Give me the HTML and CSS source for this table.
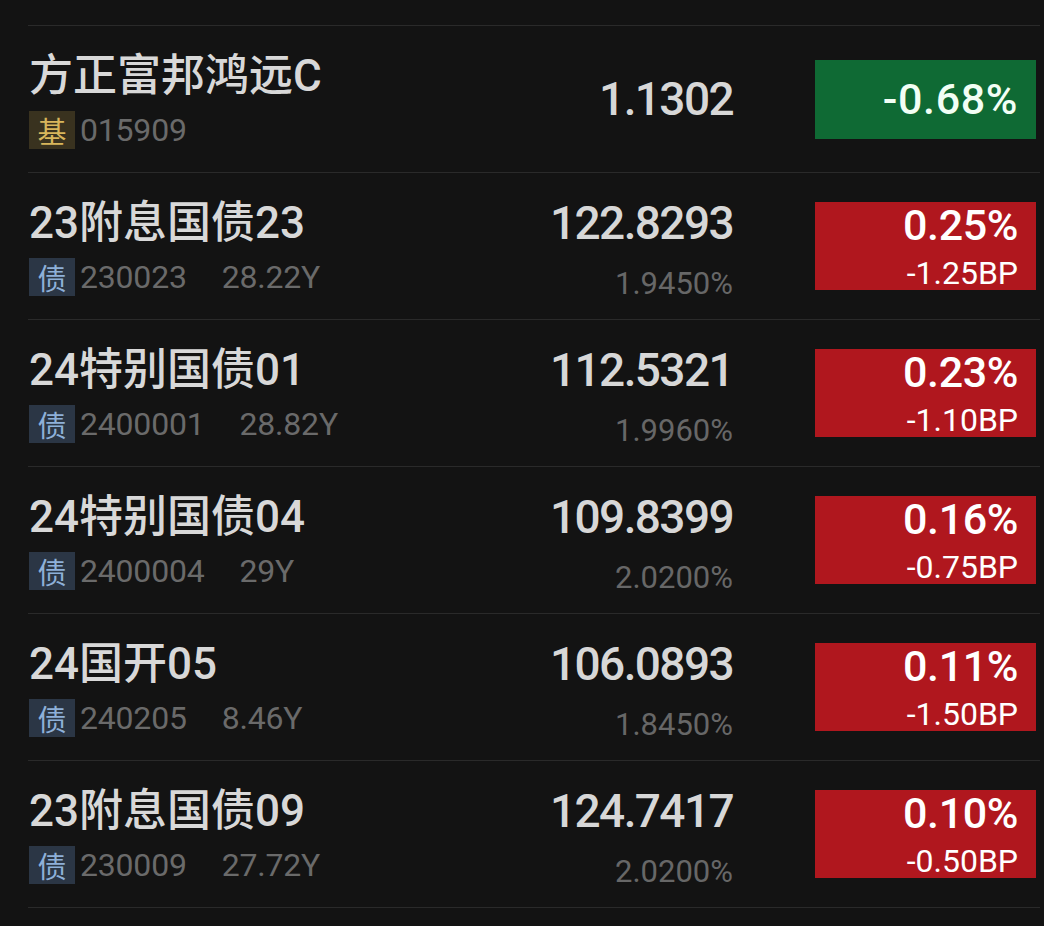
FILE: index.html
```html
<!DOCTYPE html>
<html lang="zh-CN">
<head>
<meta charset="utf-8">
<title>行情列表</title>
<link rel="stylesheet" href="styles.css">
</head>
<body>
<div class="list">
  <div class="row">
    <div class="info">
      <div class="name">方正富邦鸿远C</div>
      <div class="meta"><span class="tag tag-fund">基</span><span class="code">015909</span></div>
    </div>
    <div class="quote">
      <div class="price">1.1302</div>
    </div>
    <div class="chg chg-down"><div class="pct">-0.68%</div></div>
  </div>
  <div class="row">
    <div class="info">
      <div class="name">23附息国债23</div>
      <div class="meta"><span class="tag tag-bond">债</span><span class="code">230023</span><span class="term">28.22Y</span></div>
    </div>
    <div class="quote quote-bond">
      <div class="price">122.8293</div>
      <div class="yield">1.9450%</div>
    </div>
    <div class="chg chg-up"><div class="pct">0.25%</div><div class="bp">-1.25BP</div></div>
  </div>
  <div class="row">
    <div class="info">
      <div class="name">24特别国债01</div>
      <div class="meta"><span class="tag tag-bond">债</span><span class="code">2400001</span><span class="term">28.82Y</span></div>
    </div>
    <div class="quote quote-bond">
      <div class="price">112.5321</div>
      <div class="yield">1.9960%</div>
    </div>
    <div class="chg chg-up"><div class="pct">0.23%</div><div class="bp">-1.10BP</div></div>
  </div>
  <div class="row">
    <div class="info">
      <div class="name">24特别国债04</div>
      <div class="meta"><span class="tag tag-bond">债</span><span class="code">2400004</span><span class="term">29Y</span></div>
    </div>
    <div class="quote quote-bond">
      <div class="price">109.8399</div>
      <div class="yield">2.0200%</div>
    </div>
    <div class="chg chg-up"><div class="pct">0.16%</div><div class="bp">-0.75BP</div></div>
  </div>
  <div class="row">
    <div class="info">
      <div class="name">24国开05</div>
      <div class="meta"><span class="tag tag-bond">债</span><span class="code">240205</span><span class="term">8.46Y</span></div>
    </div>
    <div class="quote quote-bond">
      <div class="price">106.0893</div>
      <div class="yield">1.8450%</div>
    </div>
    <div class="chg chg-up"><div class="pct">0.11%</div><div class="bp">-1.50BP</div></div>
  </div>
  <div class="row">
    <div class="info">
      <div class="name">23附息国债09</div>
      <div class="meta"><span class="tag tag-bond">债</span><span class="code">230009</span><span class="term">27.72Y</span></div>
    </div>
    <div class="quote quote-bond">
      <div class="price">124.7417</div>
      <div class="yield">2.0200%</div>
    </div>
    <div class="chg chg-up"><div class="pct">0.10%</div><div class="bp">-0.50BP</div></div>
  </div>
</div>
</body>
</html>
```

FILE: styles.css
```css
html, body {
  margin: 0;
  padding: 0;
  background: #131313;
}

body {
  font-family: "Roboto", "Noto Sans CJK SC", sans-serif;
  height: 926px;
  overflow: hidden;
}

.list {
  margin: 25px 4px 0 28px;
  border-top: 1px solid #2a2a2a;
}

.row {
  height: 146px;
  border-bottom: 1px solid #2a2a2a;
  display: grid;
  grid-template-columns: 1fr auto 221px;
  align-items: center;
  padding: 0 4px 0 1px;
}

.info {
  display: flex;
  flex-direction: column;
}

.name {
  font-size: 44px;
  line-height: 52px;
  font-weight: 500;
  color: #d8d8d8;
  white-space: nowrap;
}

.meta {
  margin-top: 9px;
  height: 38px;
  display: flex;
  align-items: center;
}

.tag {
  width: 46px;
  height: 38px;
  display: flex;
  align-items: center;
  justify-content: center;
  font-family: "Noto Sans CJK SC", sans-serif;
  font-size: 29px;
  line-height: 38px;
}

.tag-fund {
  background: #39321f;
  color: #d8b65c;
}

.tag-bond {
  background: #2b3645;
  color: #8eb0d8;
}

.code, .term {
  font-size: 32px;
  line-height: 38px;
  color: #6a6a6a;
  letter-spacing: -0.2px;
}

.code {
  margin-left: 5px;
}

.term {
  margin-left: 35px;
}

.quote {
  display: flex;
  flex-direction: column;
  align-items: flex-end;
  padding-right: 82px;
}

.quote-bond {
  padding-top: 6px;
}

.price {
  font-size: 46px;
  line-height: 52px;
  font-weight: 500;
  color: #d7d7d7;
  letter-spacing: -1.6px;
}

.yield {
  margin-top: 17px;
  font-size: 31px;
  line-height: 36px;
  color: #676767;
  letter-spacing: 0;
}

.chg {
  height: 88px;
  display: flex;
  flex-direction: column;
  justify-content: center;
  align-items: flex-end;
  gap: 8px;
  padding-right: 18px;
  box-sizing: border-box;
  color: #ffffff;
}

.chg-up {
  background: #b0171e;
}

.chg-down {
  height: 79px;
  background: #0f6a34;
  color: #f2fff5;
}

.pct {
  font-size: 43px;
  line-height: 46px;
  font-weight: 500;
  letter-spacing: -0.4px;
}

.chg-down .pct {
  letter-spacing: 0.6px;
}

.bp {
  font-size: 32px;
  line-height: 34px;
  letter-spacing: 0;
}
```
